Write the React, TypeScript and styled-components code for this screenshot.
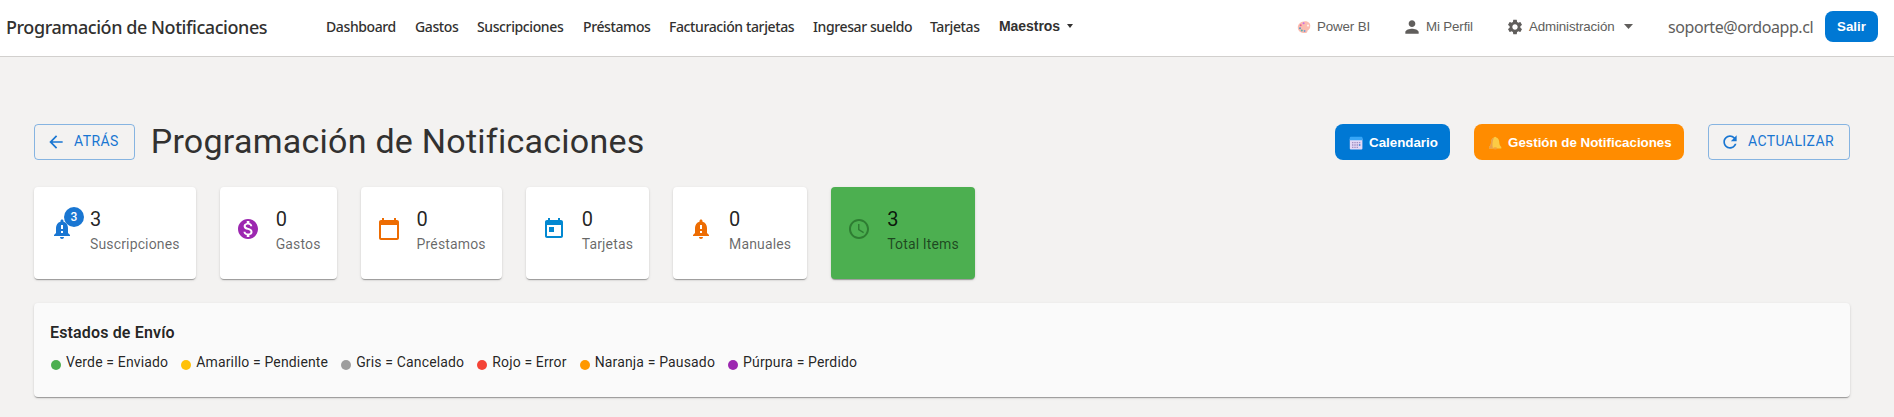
import React from "react";
import styled, { createGlobalStyle } from "styled-components";

const Global = createGlobalStyle`
  * { box-sizing: border-box; }
  body { margin: 0; background: #f3f2f1; font-family: Roboto, sans-serif; color: rgba(0,0,0,.87); }
`;
const segoe = `"Noto Sans", "Open Sans", sans-serif`;
const arial = `"Liberation Sans", Arial, sans-serif`;

const Page = styled.div`min-height: 417px;`;
const Header = styled.header`
  height: 57px; background: #fff; border-bottom: 1px solid #d2d0ce;
  display: flex; align-items: center; padding: 0 16px 3px 6px; white-space: nowrap;
`;
const Brand = styled.div`
  width: 320px; font: 500 18px/24px ${segoe}; color: #323130; letter-spacing: -0.44px;
`;
const Nav = styled.nav`display: flex; align-items: center; gap: 20px; flex: 1;`;
const NavItem = styled.a<{ $w: number }>`
  width: ${(p) => p.$w}px; font: 500 14px/20px ${segoe}; letter-spacing: -0.39px; color: #323130;
`;
const NavMenu = styled.button`
  border: 0; background: none; padding: 0 0 2px; display: flex; align-items: center; gap: 7px;
  font: bold 14px/18px ${arial}; letter-spacing: -0.05px; color: #323130;
`;
const HeaderLink = styled.a<{ $w: number; $gap: number }>`
  width: ${(p) => p.$w}px; display: flex; align-items: center; gap: ${(p) => p.$gap}px;
  font: 13.33px/18px ${arial}; letter-spacing: -0.14px; color: #605e5c;
`;
const Email = styled.span`
  width: 157px; font: 16px/22px ${segoe}; letter-spacing: -0.43px; color: #605e5c;
`;
const Logout = styled.button`
  width: 53px; height: 31px; margin-top: -1px; border: 0; border-radius: 8px; background: #0078d4;
  color: #fff; font: bold 13.33px/18px ${arial}; padding: 1px 0 0;
`;

const Main = styled.main`padding: 67px 44px 0 34px; display: flex; flex-direction: column;`;
const TitleRow = styled.div`display: flex; align-items: center; height: 36px;`;
const Title = styled.h1`
  margin: 0 auto 0 16px; padding-bottom: 2px; font: 400 34px/42px Roboto, sans-serif; letter-spacing: 0.00735em; color: #323130;
`;
const Outlined = styled.button`
  height: 36px; display: flex; align-items: center; gap: 8px; padding: 0 15px 0 11px;
  border: 1px solid rgba(25,118,210,.5); border-radius: 4px; background: none;
  font: 400 14px/24px Roboto, sans-serif; letter-spacing: 0.02857em; color: #1976d2;
`;
const ButtonLabel = styled.span`padding-bottom: 2px;`;
const Solid = styled.button<{ $bg: string; $w: number }>`
  width: ${(p) => p.$w}px; height: 36px; margin-right: 24px; border: 0; border-radius: 8px; background: ${(p) => p.$bg};
  display: flex; align-items: center; gap: 6px; padding: 1px 0 0 14px; white-space: nowrap;
  color: #fff; font: bold 13.33px/18px ${arial};
`;

const shadow = `0 2px 1px -1px rgba(0,0,0,.2), 0 1px 1px 0 rgba(0,0,0,.14), 0 1px 3px 0 rgba(0,0,0,.12)`;
const Cards = styled.div`display: flex; gap: 24px; margin-top: 27px;`;
const Card = styled.div<{ $bg?: string }>`
  height: 92px; padding: 16px 16px 24px; display: flex; align-items: center; gap: 16px;
  background: ${(p) => p.$bg || "#fff"}; border-radius: 4px; box-shadow: ${shadow};
`;
const CardIcon = styled.div<{ $c: string }>`position: relative; height: 24px; color: ${(p) => p.$c};`;
const Badge = styled.span`
  position: absolute; top: -10px; right: -10px; width: 20px; height: 20px; border-radius: 10px;
  background: #1976d2; color: #fff; font: 500 12px/20px Roboto, sans-serif; text-align: center;
`;
const Count = styled.div`font-size: 20px; line-height: 32px; letter-spacing: 0.0075em;`;
const Caption = styled.div`
  font-size: 14px; line-height: 18px; padding-bottom: 2px; letter-spacing: 0.01071em; color: rgba(0,0,0,.6);
`;

const Legend = styled.section`
  height: 94px; margin-top: 24px; padding: 16px; background: #fafafa; border-radius: 4px; box-shadow: ${shadow};
`;
const LegendTitle = styled.div`
  font-size: 16px; line-height: 28px; font-weight: 600; letter-spacing: 0.00938em; margin-bottom: 5px;
`;
const LegendRow = styled.div`display: flex; gap: 13px; padding-left: 1px;`;
const LegendItem = styled.div`
  display: flex; align-items: center; gap: 5px; font-size: 14px; line-height: 20px; letter-spacing: 0.01071em;
`;
const Dot = styled.i<{ $c: string }>`
  width: 10px; height: 10px; margin-top: 6px; border-radius: 50%; background: ${(p) => p.$c};
`;

const Svg = styled.svg`display: block; flex: none; fill: currentColor;`;
const MenuCaret = styled(Svg)<{ $push?: number }>`margin-left: ${(p) => p.$push || 0}px;`;
const Icon = ({ d, size = 24 }: { d: string; size?: number }) => (
  <Svg width={size} height={size} viewBox="0 0 24 24"><path d={d} /></Svg>
);

const BELL = "M12 22c1.1 0 2-.9 2-2h-4c0 1.1.9 2 2 2m6-6v-5c0-3.07-1.64-5.64-4.5-6.32V4c0-.83-.67-1.5-1.5-1.5s-1.5.67-1.5 1.5v.68C7.63 5.36 6 7.92 6 11v5l-2 2v1h16v-1zm-5 0h-2v-2h2zm0-4h-2V8h2z";
const MONEY = "M12 2C6.48 2 2 6.48 2 12s4.48 10 10 10 10-4.48 10-10S17.52 2 12 2m1.41 16.09V20h-2.67v-1.93c-1.71-.36-3.16-1.46-3.27-3.4h1.96c.1 1.05.82 1.87 2.65 1.87 1.96 0 2.4-.98 2.4-1.59 0-.83-.44-1.61-2.67-2.14-2.48-.6-4.18-1.62-4.18-3.67 0-1.72 1.39-2.84 3.11-3.21V4h2.67v1.95c1.86.45 2.79 1.86 2.85 3.39H14.3c-.05-1.11-.64-1.87-2.22-1.87-1.5 0-2.4.68-2.4 1.64 0 .84.65 1.39 2.67 1.91s4.18 1.39 4.18 3.91c-.01 1.83-1.38 2.83-3.12 3.16";
const CALENDAR = "M20 3h-1V1h-2v2H7V1H5v2H4c-1.1 0-2 .9-2 2v16c0 1.1.9 2 2 2h16c1.1 0 2-.9 2-2V5c0-1.1-.9-2-2-2m0 18H4V8h16z";
const TODAY = "M19 3h-1V1h-2v2H8V1H6v2H5c-1.11 0-1.99.9-1.99 2L3 19c0 1.1.89 2 2 2h14c1.1 0 2-.9 2-2V5c0-1.1-.9-2-2-2m0 16H5V8h14zM7 10h5v5H7z";
const CLOCK = "M11.99 2C6.47 2 2 6.48 2 12s4.47 10 9.99 10C17.52 22 22 17.52 22 12S17.52 2 11.99 2M12 20c-4.42 0-8-3.58-8-8s3.58-8 8-8 8 3.58 8 8-3.58 8-8 8m.5-13H11v6l5.25 3.15.75-1.23-4.5-2.67z";
const BACK = "M20 11H7.83l5.59-5.59L12 4l-8 8 8 8 1.41-1.41L7.83 13H20z";
const REFRESH = "M17.65 6.35C16.2 4.9 14.21 4 12 4c-4.42 0-7.99 3.58-7.99 8s3.57 8 7.99 8c3.73 0 6.84-2.55 7.73-6h-2.08c-.82 2.33-3.04 4-5.65 4-3.31 0-6-2.69-6-6s2.69-6 6-6c1.66 0 3.14.69 4.22 1.78L13 11h7V4z";
const PERSON = "M12 12c2.21 0 4-1.79 4-4s-1.79-4-4-4-4 1.79-4 4 1.79 4 4 4m0 2c-2.67 0-8 1.34-8 4v2h16v-2c0-2.66-5.33-4-8-4";
const GEAR = "M19.14 12.94c.04-.3.06-.61.06-.94 0-.32-.02-.64-.07-.94l2.03-1.58c.18-.14.23-.41.12-.61l-1.92-3.32c-.12-.22-.37-.29-.59-.22l-2.39.96c-.5-.38-1.03-.7-1.62-.94l-.36-2.54c-.04-.24-.24-.41-.48-.41h-3.84c-.24 0-.43.17-.47.41l-.36 2.54c-.59.24-1.13.57-1.62.94l-2.39-.96c-.22-.08-.47 0-.59.22L2.74 8.87c-.12.21-.08.47.12.61l2.03 1.58c-.05.3-.09.63-.09.94s.02.64.07.94l-2.03 1.58c-.18.14-.23.41-.12.61l1.92 3.32c.12.22.37.29.59.22l2.39-.96c.5.38 1.03.7 1.62.94l.36 2.54c.05.24.24.41.48.41h3.84c.24 0 .44-.17.47-.41l.36-2.54c.59-.24 1.13-.56 1.62-.94l2.39.96c.22.08.47 0 .59-.22l1.92-3.32c.12-.22.07-.47-.12-.61zM12 15.6c-1.98 0-3.6-1.62-3.6-3.6s1.62-3.6 3.6-3.6 3.6 1.62 3.6 3.6-1.62 3.6-3.6 3.6";

const Palette = () => (
  <Svg width="14" height="14" viewBox="0 0 14 14">
    <path d="M.8 7.800C.6 4 4 1.200 8 1.200c3 0 5.300 1.800 5.300 4.300q.3 3.500-1.800 4.600c-.8.300-1 .7-1.100 1.300-.2 1.100-1.100 1.700-2.900 1.700C4 13.100 1 11.200.8 7.800z" fill="#fbbcb0" />
    <circle cx="11" cy="5.600" r="1.100" fill="#fff0ee" />
    <circle cx="6.600" cy="3.300" r="1" fill="#c86ee8" />
    <circle cx="3.700" cy="5.200" r="1" fill="#e8638e" />
    <circle cx="3" cy="8.200" r="1" fill="#5a9bc4" />
    <circle cx="4.800" cy="10.500" r="1" fill="#55b3a8" />
    <circle cx="7.600" cy="11" r=".9" fill="#6c9ad8" />
  </Svg>
);
const CalendarEmoji = () => (
  <Svg width="14" height="14" viewBox="0 0 14 14">
    <rect x=".8" y="2" width="12.600" height="11.600" rx="1" fill="#e2d8f5" />
    <path d="M.8 4.300V1.800q0-1 1-1h10.600q1 0 1 1v2.500z" fill="#37a6f7" />
    <path d="M3 6.700h8.500M3 9h8.500M3 11.300h6" stroke="#a18fc2" strokeWidth="1.300" strokeDasharray="1.400 .9" />
    <path d="M9.900 9h1.400" stroke="#2d8be0" strokeWidth="1.300" />
  </Svg>
);
const BellEmoji = () => (
  <Svg width="14" height="14" viewBox="0 0 14 14">
    <path d="M6 1.500Q7.200 0 8.300 1.500c2.300.7 2.900 3 3 5.200.2 2 .7 3 2 4.200v1.500H1v-1.500c1.300-1.200 1.800-2.200 2-4.200.1-2.200.7-4.500 3-5.200z" fill="#fccb45" />
    <path d="M6 1.500c-2.300.7-2.900 3-3 5.200-.2 2-.7 3-2 4.200v1.500h4c-1-3-.6-8 1-10.900z" fill="#e9a04c" />
    <ellipse cx="7.200" cy="12.400" rx="2" ry="1.100" fill="#f3a13c" />
  </Svg>
);
const Caret = ({ w, h, push }: { w: number; h: number; push?: number }) => (
  <MenuCaret $push={push} width={w} height={h} viewBox="0 0 10 5" preserveAspectRatio="none"><path d="M0 0h10L5 5z" /></MenuCaret>
);

const nav: [string, number][] = [
  ["Dashboard", 69], ["Gastos", 42], ["Suscripciones", 86], ["Préstamos", 66],
  ["Facturación tarjetas", 124], ["Ingresar sueldo", 97], ["Tarjetas", 49],
];
const cards = [
  { n: 3, t: "Suscripciones", d: BELL, c: "#1976d2", badge: 3 },
  { n: 0, t: "Gastos", d: MONEY, c: "#9c27b0" },
  { n: 0, t: "Préstamos", d: CALENDAR, c: "#ed6c02" },
  { n: 0, t: "Tarjetas", d: TODAY, c: "#0288d1" },
  { n: 0, t: "Manuales", d: BELL, c: "#ed6c02" },
  { n: 3, t: "Total Items", d: CLOCK, c: "#2e7d32", bg: "#4caf50" },
];
const states = [
  ["Verde = Enviado", "#4caf50"], ["Amarillo = Pendiente", "#ffc107"], ["Gris = Cancelado", "#9e9e9e"],
  ["Rojo = Error", "#f44336"], ["Naranja = Pausado", "#ff9800"], ["Púrpura = Perdido", "#9c27b0"],
];

export default function App() {
  return (
    <Page>
      <Global />
      <Header>
        <Brand>Programación de Notificaciones</Brand>
        <Nav>
          {nav.map(([t, w]) => <NavItem key={t} $w={w}>{t}</NavItem>)}
          <NavMenu>Maestros <Caret w={6} h={4} /></NavMenu>
        </Nav>
        <HeaderLink $w={105} $gap={6}><Palette />Power BI</HeaderLink>
        <HeaderLink $w={104} $gap={4}><Icon d={PERSON} size={20} />Mi Perfil</HeaderLink>
        <HeaderLink $w={162} $gap={5}><Icon d={GEAR} size={18} />Administración<Caret w={9} h={5} push={5} /></HeaderLink>
        <Email>soporte@ordoapp.cl</Email>
        <Logout>Salir</Logout>
      </Header>
      <Main>
        <TitleRow>
          <Outlined><Icon d={BACK} size={20} /><ButtonLabel>ATRÁS</ButtonLabel></Outlined>
          <Title>Programación de Notificaciones</Title>
          <Solid $bg="#0078d4" $w={115}><CalendarEmoji />Calendario</Solid>
          <Solid $bg="#ff8c00" $w={210}><BellEmoji />Gestión de Notificaciones</Solid>
          <Outlined><Icon d={REFRESH} size={20} /><ButtonLabel>ACTUALIZAR</ButtonLabel></Outlined>
        </TitleRow>
        <Cards>
          {cards.map((c) => (
            <Card key={c.t} $bg={c.bg}>
              <CardIcon $c={c.c}><Icon d={c.d} />{c.badge && <Badge>{c.badge}</Badge>}</CardIcon>
              <div><Count>{c.n}</Count><Caption>{c.t}</Caption></div>
            </Card>
          ))}
        </Cards>
        <Legend>
          <LegendTitle>Estados de Envío</LegendTitle>
          <LegendRow>
            {states.map(([t, c]) => <LegendItem key={t}><Dot $c={c} />{t}</LegendItem>)}
          </LegendRow>
        </Legend>
      </Main>
    </Page>
  );
}
